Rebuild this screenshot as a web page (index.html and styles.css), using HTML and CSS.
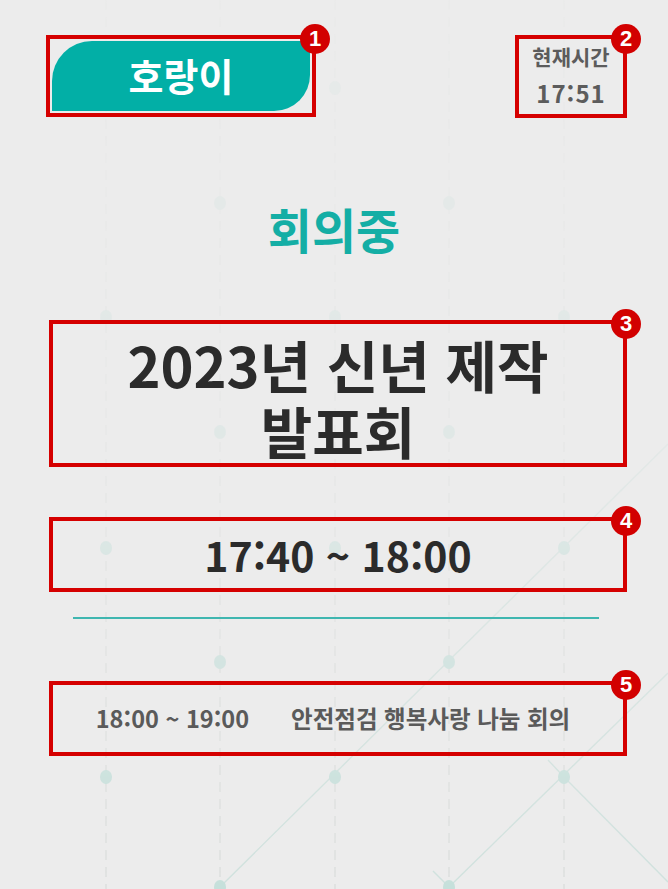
FILE: index.html
```html
<!DOCTYPE html>
<html lang="ko">
<head>
<meta charset="utf-8">
<title>회의실 현황</title>
<link rel="stylesheet" href="styles.css">
</head>
<body>
<div class="screen">
  <svg class="bg-pattern" width="668" height="889" viewBox="0 0 668 889" aria-hidden="true">
    <defs>
      <linearGradient id="fade" x1="0" y1="0" x2="0" y2="889" gradientUnits="userSpaceOnUse">
        <stop offset="0" stop-color="#fff" stop-opacity="0.1"/>
        <stop offset="0.5" stop-color="#fff" stop-opacity="0.3"/>
        <stop offset="1" stop-color="#fff" stop-opacity="1"/>
      </linearGradient>
      <mask id="fadeMask" maskUnits="userSpaceOnUse" x="0" y="0" width="668" height="889">
        <rect x="0" y="0" width="668" height="889" fill="url(#fade)"/>
      </mask>
    </defs>
    <g mask="url(#fadeMask)">
      <g class="dash-lines">
        <line x1="106" y1="0" x2="106" y2="889"/>
        <line x1="220" y1="0" x2="220" y2="889"/>
        <line x1="335" y1="0" x2="335" y2="889"/>
        <line x1="449" y1="0" x2="449" y2="889"/>
        <line x1="564" y1="0" x2="564" y2="889"/>
      </g>
      <g class="diag-lines">
        <line x1="220" y1="887" x2="668" y2="444"/>
        <line x1="449" y1="887" x2="668" y2="673"/>
        <line x1="564" y1="777" x2="668" y2="882"/>
        <line x1="433" y1="871" x2="449" y2="887"/>
        <line x1="548" y1="760" x2="564" y2="777"/>
      </g>
      <g class="dots">
        <ellipse cx="335" cy="88" rx="6" ry="7"/>
        <ellipse cx="220" cy="203" rx="6" ry="7"/>
        <ellipse cx="449" cy="203" rx="6" ry="7"/>
        <ellipse cx="106" cy="317" rx="6" ry="7"/>
        <ellipse cx="335" cy="317" rx="6" ry="7"/>
        <ellipse cx="564" cy="317" rx="6" ry="7"/>
        <ellipse cx="220" cy="432" rx="6" ry="7"/>
        <ellipse cx="449" cy="432" rx="6" ry="7"/>
        <ellipse cx="106" cy="548" rx="6" ry="7"/>
        <ellipse cx="335" cy="548" rx="6" ry="7"/>
        <ellipse cx="564" cy="548" rx="6" ry="7"/>
        <ellipse cx="220" cy="662" rx="6" ry="7"/>
        <ellipse cx="449" cy="662" rx="6" ry="7"/>
        <ellipse cx="106" cy="777" rx="6" ry="7"/>
        <ellipse cx="335" cy="777" rx="6" ry="7"/>
        <ellipse cx="564" cy="777" rx="6" ry="7"/>
        <ellipse cx="220" cy="887" rx="6" ry="7"/>
        <ellipse cx="449" cy="887" rx="6" ry="7"/>
      </g>
    </g>
  </svg>

  <main class="content">
    <header class="top">
      <div class="mark mark-name">
        <div class="name-pill">호랑이</div>
        <span class="badge">1</span>
      </div>
      <div class="mark mark-clock">
        <div class="clock-label">현재시간</div>
        <div class="clock-time">17:51</div>
        <span class="badge">2</span>
      </div>
    </header>

    <div class="status">회의중</div>

    <div class="mark mark-wide mark-title">
      <h1 class="title"><span class="title-line">2023년 신년 제작</span><span class="title-line">발표회</span></h1>
      <span class="badge">3</span>
    </div>

    <div class="mark mark-wide mark-time">
      <div class="time-range">17:40 ~ 18:00</div>
      <span class="badge">4</span>
    </div>

    <div class="divider"></div>

    <div class="mark mark-wide mark-next">
      <div class="next-row">
        <span class="next-time">18:00 ~ 19:00</span>
        <span class="next-name">안전점검 행복사랑 나눔 회의</span>
      </div>
      <span class="badge">5</span>
    </div>
  </main>
</div>
</body>
</html>
```

FILE: styles.css
```css
* {
  box-sizing: border-box;
}

html, body {
  margin: 0;
  padding: 0;
}

body {
  background: #ececec;
  font-family: "Noto Sans CJK KR", "Noto Sans", sans-serif;
  font-weight: 700;
}

.screen {
  position: relative;
  width: 668px;
  height: 889px;
  overflow: hidden;
  background: #ececec;
}

.bg-pattern {
  position: absolute;
  left: 0;
  top: 0;
  z-index: 0;
}

.dash-lines line {
  stroke: #d9dcdb;
  stroke-width: 1.2;
  stroke-dasharray: 10 7;
}

.diag-lines line {
  stroke: #cfe1dd;
  stroke-width: 1.4;
}

.dots ellipse {
  fill: #c6e0db;
}

.content {
  position: relative;
  z-index: 1;
  display: flex;
  flex-direction: column;
  padding-top: 35px;
}

.top {
  display: flex;
  justify-content: space-between;
  align-items: flex-start;
  padding: 0 41px 0 46px;
}

.mark {
  position: relative;
  border: 4px solid #d50000;
}

.badge {
  position: absolute;
  top: -15px;
  right: -18px;
  width: 30px;
  height: 30px;
  border-radius: 50%;
  background: #d20000;
  color: #ffffff;
  font-family: "Liberation Sans", Arial, sans-serif;
  font-weight: 700;
  font-size: 22px;
  line-height: 30px;
  text-align: center;
}

.mark-name {
  width: 270px;
  height: 82px;
  padding: 2px;
}

.name-pill {
  height: 100%;
  background: #02afa6;
  border-radius: 40px 0 36px 0;
  color: #ffffff;
  font-size: 38px;
  line-height: 1;
  display: flex;
  align-items: center;
  justify-content: center;
  padding-bottom: 2px;
}

.mark-clock {
  width: 112px;
  height: 83px;
  display: flex;
  flex-direction: column;
  align-items: center;
  justify-content: flex-start;
  color: #5c5c5c;
  gap: 12px;
  padding-top: 5px;
}

.clock-label {
  font-size: 21px;
  line-height: 24px;
}

.clock-time {
  font-size: 24px;
  line-height: 26px;
  letter-spacing: 1px;
}

.status {
  margin-top: 82px;
  text-align: center;
  color: #14aea5;
  font-size: 48px;
  line-height: 56px;
}

.mark-wide {
  width: 578px;
  margin-left: 49px;
}

.mark-title {
  margin-top: 64px;
  height: 147px;
  padding-top: 7px;
}

.title {
  margin: 0;
  text-align: center;
  color: #2b2b2b;
  font-size: 56px;
  font-weight: 700;
}

.title-line {
  display: block;
  line-height: 66px;
  height: 66px;
}

.mark-time {
  margin-top: 50px;
  height: 75px;
  display: flex;
  align-items: center;
  justify-content: center;
}

.time-range {
  color: #2b2b2b;
  font-size: 41px;
  line-height: 1;
}

.divider {
  margin-top: 25px;
  margin-left: 73px;
  width: 526px;
  height: 2px;
  background: #3fb6b0;
}

.mark-next {
  margin-top: 62px;
  height: 75px;
  display: flex;
  align-items: center;
  justify-content: center;
}

.next-row {
  display: flex;
  gap: 42px;
  color: #5a5a5a;
  font-size: 23.5px;
  line-height: 1;
  padding-right: 10px;
}
```
